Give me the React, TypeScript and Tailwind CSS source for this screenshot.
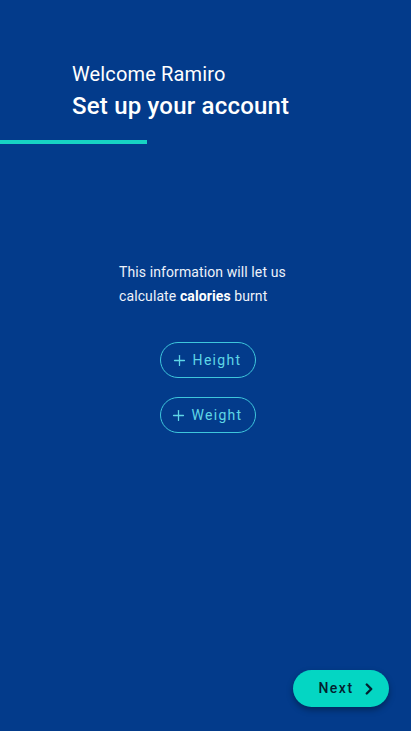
import { ChevronRight, Plus } from 'lucide-react';

const font = { fontFamily: 'Roboto, "Liberation Sans", sans-serif' };

function MeasureButton({ label }: { label: string }) {
  return (
    <button className="flex h-9 w-24 items-center justify-center gap-[5px] rounded-full border border-[#3ec6dc] text-[14px] tracking-[1.3px] text-[#5fd6e6]">
      <Plus size={17} strokeWidth={1.8} className="-ml-1" />
      <span>{label}</span>
    </button>
  );
}

export default function App() {
  return (
    <div style={font} className="flex h-[731px] w-full flex-col bg-[#033b8b] text-white">
      <div className="pl-[72px] pt-[60px]">
        <h2 className="text-[20px] leading-[28px] tracking-[0.15px]">Welcome Ramiro</h2>
        <h1 className="mt-[2px] text-[24px] font-medium leading-[32px] tracking-[0.2px]">Set up your account</h1>
      </div>
      <div className="mt-[18px] h-1 w-[147px] bg-[#17d3c3]" />

      <div className="flex flex-col items-center pl-[5px]">
        <p className="mt-[116px] w-[178px] text-[14px] leading-[24px] tracking-[0.1px] text-[#eef2fa]">
          This information will let us calculate <b className="font-bold text-white">calories</b> burnt
        </p>

        <div className="mt-[34px] flex flex-col items-center gap-[19px]">
          <MeasureButton label="Height" />
          <MeasureButton label="Weight" />
        </div>
      </div>

      <div className="mt-auto flex justify-end pb-6 pr-[22px]">
        <button className="flex h-[37px] w-24 items-center justify-center gap-[6px] rounded-full bg-[#04d6c3] pl-[14px] text-[14px] font-medium tracking-[1.5px] text-[#04202e] shadow-[0_3px_6px_rgba(0,0,0,0.35)]">
          <span>Next</span>
          <ChevronRight size={18} strokeWidth={3.2} />
        </button>
      </div>
    </div>
  );
}
